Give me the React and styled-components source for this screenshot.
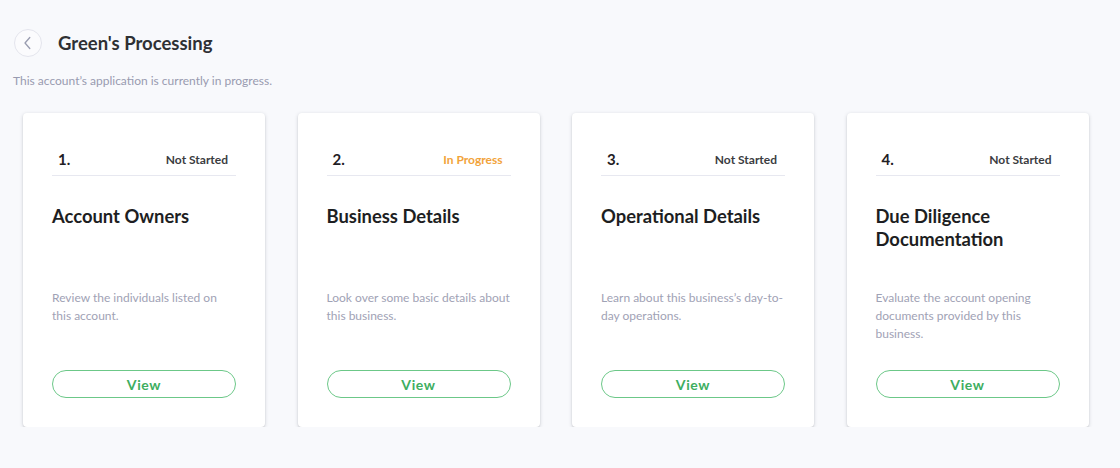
import React from "react"
import styled, { createGlobalStyle } from "styled-components"

const GlobalStyle = createGlobalStyle`
  html, body {
    margin: 0;
    padding: 0;
    background: #f8f9fc;
    font-family: Lato, "Open Sans", sans-serif;
  }
  * { box-sizing: border-box; }
`

const Page = styled.div`
  padding: 29px 0 0 13px;
`

const Header = styled.div`
  display: flex;
  align-items: center;
  gap: 16px;
  padding-left: 1px;
`

const BackButton = styled.button`
  width: 28px;
  height: 28px;
  border-radius: 50%;
  border: 1px solid #e4e5ed;
  background: #fbfbfd;
  display: flex;
  align-items: center;
  justify-content: center;
  padding: 0;
  cursor: pointer;
`

const Title = styled.h1`
  margin: 0;
  font-size: 18.5px;
  font-weight: 700;
  color: #2e3034;
`

const Subtitle = styled.p`
  margin: 15px 0 0;
  font-size: 12px;
  line-height: 18px;
  color: #989bb0;
`

const Cards = styled.div`
  display: grid;
  grid-template-columns: repeat(4, 242px);
  gap: 32.5px;
  margin-top: 23px;
  padding-left: 10px;
`

const Card = styled.div`
  height: 314px;
  background: #fff;
  border-radius: 4px;
  box-shadow: 0 1px 2px rgba(0, 0, 0, 0.12), 0 1px 4px rgba(30, 35, 60, 0.14);
  padding: 36px 29px 29px;
  display: flex;
  flex-direction: column;
`

const CardHead = styled.div`
  display: flex;
  justify-content: space-between;
  align-items: center;
  height: 27px;
  padding: 0 8px 6px 6px;
  border-bottom: 1.5px solid #e7e8f0;
`

const Step = styled.span`
  font-size: 15px;
  font-weight: 700;
  color: #1f2024;
`

const Status = styled.span`
  font-size: 12px;
  font-weight: 700;
  color: ${p => (p.$active ? "#f2a33a" : "#3b3c41")};
`

const CardTitle = styled.h2`
  margin: 29px 0 0;
  min-height: 84px;
  font-size: 18.4px;
  line-height: 23px;
  font-weight: 700;
  color: #1d1e22;
`

const Description = styled.p`
  margin: 0;
  font-size: 12px;
  line-height: 18px;
  color: #9fa2b5;
`

const ViewButton = styled.button`
  margin-top: auto;
  height: 28px;
  width: 100%;
  border: 1.5px solid #6cc888;
  border-radius: 14px;
  background: #fff;
  color: #3eae5f;
  font-family: inherit;
  font-size: 14px;
  font-weight: 700;
  letter-spacing: 0.6px;
  cursor: pointer;
`

const steps = [
  { title: "Account Owners", status: "Not Started", text: "Review the individuals listed on this account." },
  { title: "Business Details", status: "In Progress", text: "Look over some basic details about this business." },
  { title: "Operational Details", status: "Not Started", text: "Learn about this business’s day-to-day operations." },
  { title: "Due Diligence Documentation", status: "Not Started", text: "Evaluate the account opening documents provided by this business." },
]

export default function App() {
  return (
    <Page>
      <GlobalStyle />
      <Header>
        <BackButton aria-label="Back">
          <svg width="14" height="14" viewBox="0 0 14 14" fill="none">
            <path d="M8.8 1.5 L4 7 L8.8 12.5" stroke="#9a9db0" strokeWidth="1.3" strokeLinecap="round" strokeLinejoin="round" />
          </svg>
        </BackButton>
        <Title>Green's Processing</Title>
      </Header>
      <Subtitle>This account’s application is currently in progress.</Subtitle>
      <Cards>
        {steps.map((s, i) => (
          <Card key={s.title}>
            <CardHead>
              <Step>{i + 1}.</Step>
              <Status $active={s.status === "In Progress"}>{s.status}</Status>
            </CardHead>
            <CardTitle>{s.title}</CardTitle>
            <Description>{s.text}</Description>
            <ViewButton>View</ViewButton>
          </Card>
        ))}
      </Cards>
    </Page>
  )
}
